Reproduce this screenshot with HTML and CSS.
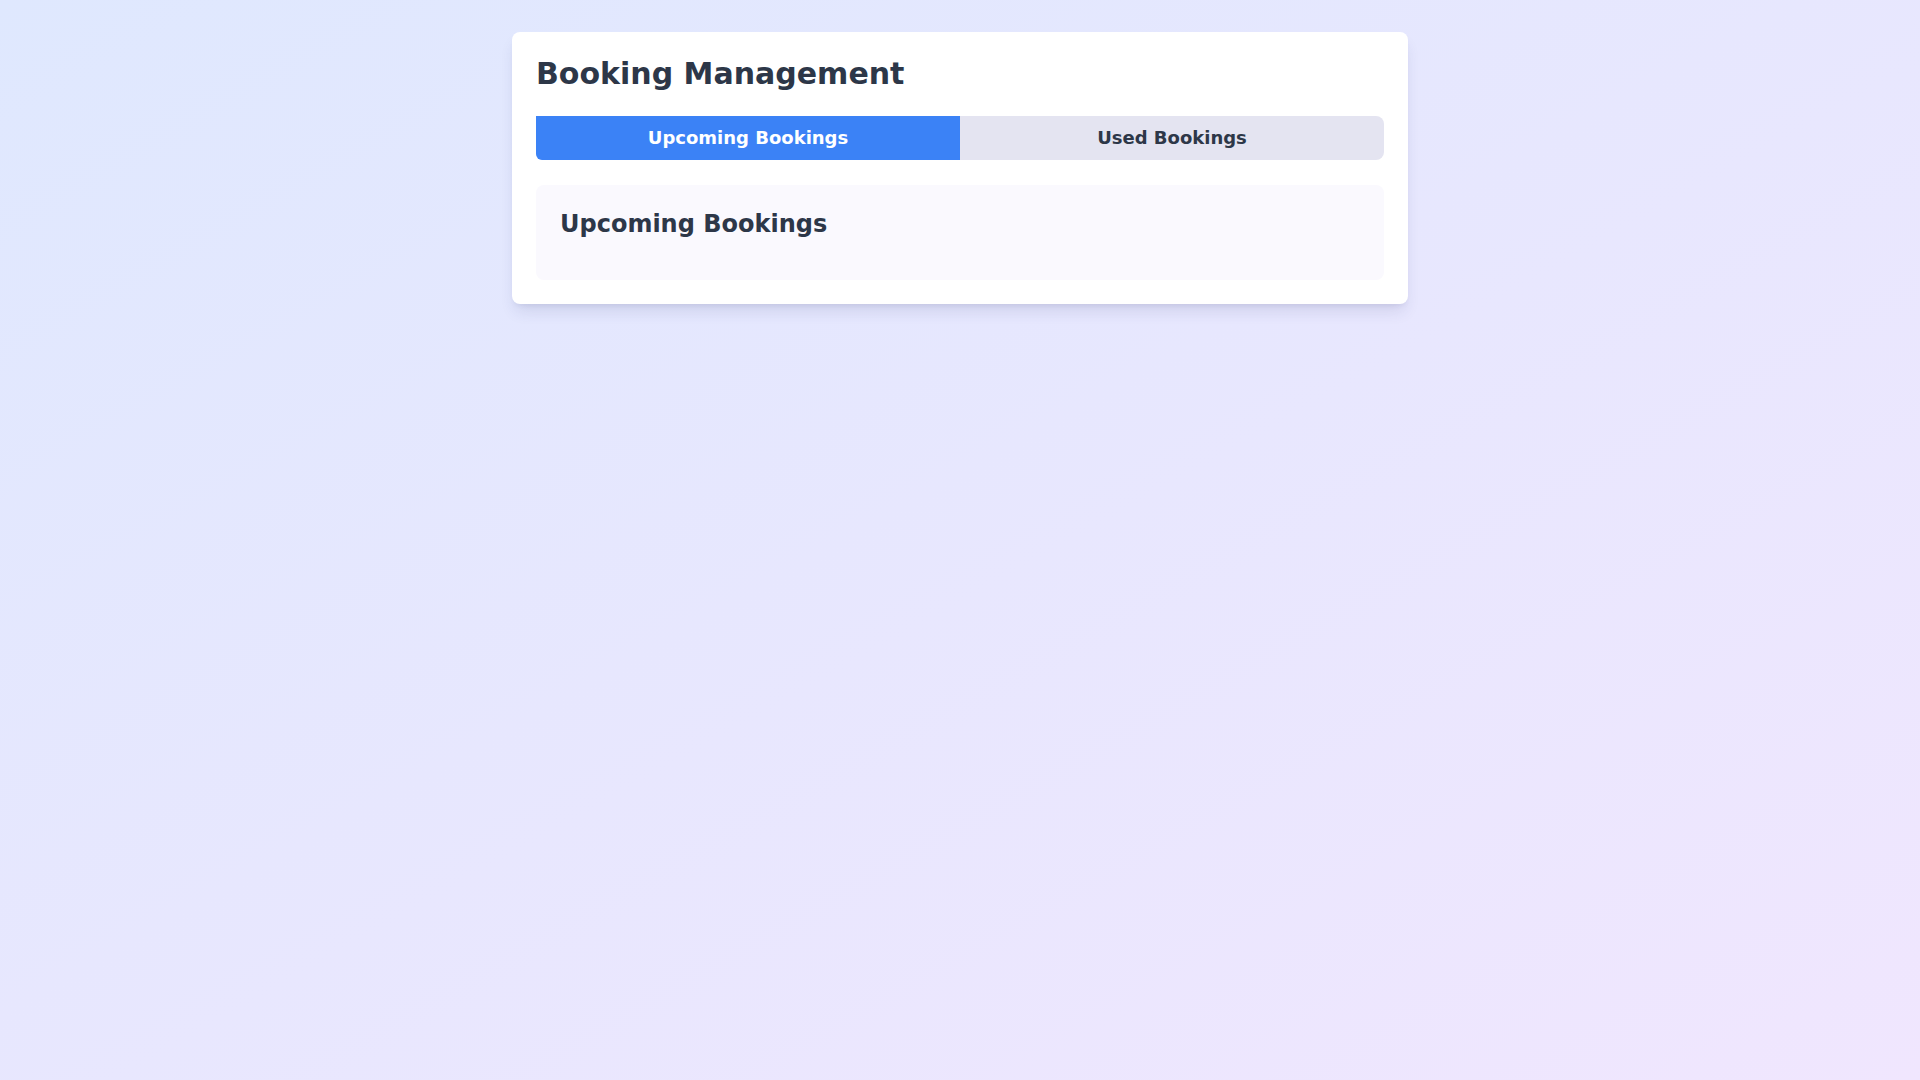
FILE: index.html
```html
<!DOCTYPE html>
<html lang="en">
<head>
<meta charset="utf-8">
<title>Booking Management</title>
<link rel="stylesheet" href="styles.css">
</head>
<body>
<main class="page">
  <section class="card">
    <h1 class="title">Booking Management</h1>
    <div class="tabs">
      <button class="tab tab-active">Upcoming Bookings</button>
      <button class="tab tab-idle">Used Bookings</button>
    </div>
    <div class="panel">
      <h2 class="panel-title">Upcoming Bookings</h2>
    </div>
  </section>
</main>
</body>
</html>
```
FILE: styles.css
```css
* { box-sizing: border-box; }
html, body { margin: 0; padding: 0; height: 100%; }
body {
  font-family: "DejaVu Sans", sans-serif;
  color: #2d3748;
  background: linear-gradient(to bottom right, #dfe8fe, #f0e6fe);
  min-height: 100vh;
}
.page {
  padding-top: 32px;
  display: flex;
  justify-content: center;
}
.card {
  width: 896px;
  background: #ffffff;
  border-radius: 8px;
  padding: 24px;
  box-shadow: 0 10px 15px -3px rgba(40, 50, 110, 0.12), 0 4px 6px -4px rgba(40, 50, 110, 0.12);
}
.title {
  margin: 0 0 24px;
  font-size: 30px;
  line-height: 36px;
  font-weight: 700;
  color: #2d3748;
}
.tabs {
  display: flex;
  background: #e4e4f1;
  border-radius: 8px;
  margin-bottom: 25px;
}
.tab {
  flex: 1;
  border: 0;
  margin: 0;
  padding: 8px 0;
  font-family: "DejaVu Sans", sans-serif;
  font-size: 18px;
  line-height: 28px;
  font-weight: 700;
  background: transparent;
  color: #2d3748;
  cursor: pointer;
}
.tab-active {
  background: #3b82f6;
  color: #ffffff;
  border-radius: 0 0 0 6px;
}
.tab-idle {
  border-radius: 0 8px 8px 0;
}
.panel {
  background: #faf9fe;
  border-radius: 8px;
  padding: 23px 24px 24px;
}
.panel-title {
  margin: 0 0 16px;
  font-size: 24px;
  line-height: 32px;
  font-weight: 700;
  color: #2d3748;
}
```
